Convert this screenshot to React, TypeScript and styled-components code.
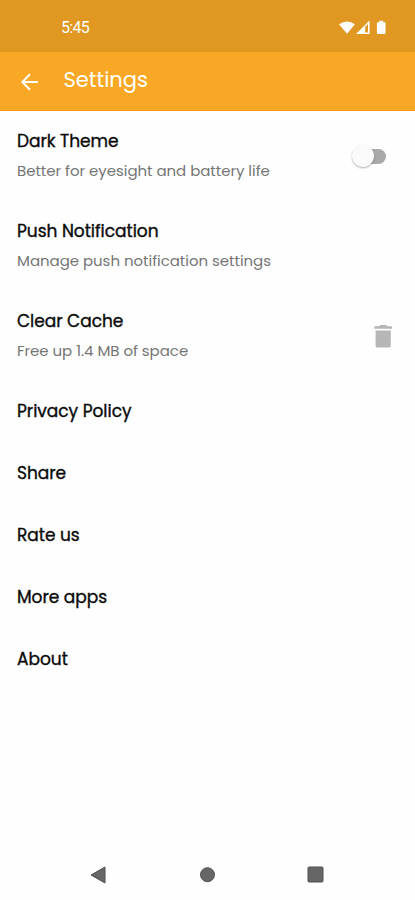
import React from 'react';
import styled, { createGlobalStyle } from 'styled-components';

const GlobalStyle = createGlobalStyle`
  *, *::before, *::after { box-sizing: border-box; }
  html, body { margin: 0; padding: 0; background: #fefefe; }
  body { font-family: Poppins, Inter, sans-serif; font-feature-settings: 'cv11' 1; }
`;

const Screen = styled.div`
  width: 100%;
  height: 900px;
  display: flex;
  flex-direction: column;
  background: #fefefe;
  overflow: hidden;
`;

const StatusBar = styled.div`
  height: 52px;
  flex: none;
  display: flex;
  align-items: center;
  justify-content: space-between;
  padding: 3px 28px 0 61px;
  background: #e09822;
  color: #fff;
`;

const Clock = styled.span`
  padding-top: 1px;
  font-family: Roboto, sans-serif;
  font-size: 16px;
  line-height: 20px;
  letter-spacing: -0.7px;
`;

const StatusIcons = styled.svg`
  display: block;
  width: 48px;
  height: 16px;
`;

const AppBar = styled.header`
  height: 59px;
  flex: none;
  display: flex;
  align-items: center;
  padding-left: 20px;
  background: #f9a825;
  border-bottom: 1px solid #f79f10;
  color: #fff;
`;

const BackButton = styled.button`
  width: 20px;
  height: 20px;
  margin: 2px 23.5px 0 0;
  padding: 0;
  border: 0;
  background: none;
  color: inherit;
  svg { display: block; }
`;

const Heading = styled.h1`
  margin: 0;
  padding-bottom: 3px;
  font-size: 21px;
  line-height: 30px;
  font-weight: 400;
`;

const List = styled.main`
  flex: 1;
`;

const Row = styled.div<{ $tall: boolean }>`
  height: ${p => (p.$tall ? 90 : 62)}px;
  padding: 15px 20px 0 17px;
  display: flex;
  justify-content: space-between;
`;

const Label = styled.div`
  font-size: 17px;
  line-height: 30px;
  font-weight: 400;
  letter-spacing: -0.02px;
  -webkit-text-stroke: 0.35px #0a0a0a;
  color: #0a0a0a;
  white-space: nowrap;
`;

const Detail = styled.div`
  font-size: 15px;
  line-height: 30px;
  font-weight: 400;
  letter-spacing: -0.04px;
  color: #757575;
  white-space: nowrap;
`;

const Switch = styled.button`
  width: 34px;
  height: 22px;
  margin: 19px 9px 0 0;
  padding: 0;
  border: 0;
  background: none;
  display: flex;
  align-items: center;
`;

const Thumb = styled.span`
  width: 22px;
  height: 22px;
  flex: none;
  border-radius: 50%;
  background: #fafafa;
  box-shadow: 0 1px 2px rgba(0, 0, 0, 0.3);
  z-index: 1;
`;

const Track = styled.span`
  width: 23px;
  height: 15px;
  flex: none;
  margin-left: -11px;
  border-radius: 0 8px 8px 0;
  background: #a9a9a9;
`;

const Trash = styled.svg`
  display: block;
  width: 18px;
  height: 23px;
  margin: 19px 3px 0 0;
  fill: #b6b6b6;
`;

const NavBar = styled.nav`
  height: 50px;
  flex: none;
  display: flex;
  justify-content: space-between;
  align-items: center;
  padding: 0 91px 1px 90px;
  svg { display: block; fill: #666; stroke: #505050; }
`;

type Item = { label: string; detail?: string; control?: 'switch' | 'trash' };

const items: Item[] = [
  { label: 'Dark Theme', detail: 'Better for eyesight and battery life', control: 'switch' },
  { label: 'Push Notification', detail: 'Manage push notification settings' },
  { label: 'Clear Cache', detail: 'Free up 1.4 MB of space', control: 'trash' },
  { label: 'Privacy Policy' },
  { label: 'Share' },
  { label: 'Rate us' },
  { label: 'More apps' },
  { label: 'About' },
];

export default function App() {
  return (
    <Screen>
      <GlobalStyle />
      <StatusBar>
        <Clock>5:45</Clock>
        <StatusIcons viewBox="0 0 48 16" fill="#fff">
          <path d="M0 4.2Q8 -1.2 16 4.2L8 13.8Z" />
          <path fillRule="evenodd" d="M30.600 .6V14H17Z M26.200 6.800V12.400H29V4Z" />
          <path d="M40.2 .8h4v1.4h1.6q.7 0 .7.7V13q0 1-1 1h-6.600q-1 0-1-1V2.900q0-.7.7-.7h1.600Z" />
        </StatusIcons>
      </StatusBar>
      <AppBar>
        <BackButton aria-label="Back">
          <svg width="20" height="20" viewBox="0 0 20 20" fill="none" stroke="#fff" strokeWidth="2">
            <path d="M18 10H3M10 2.300L2.300 10L10 17.700" />
          </svg>
        </BackButton>
        <Heading>Settings</Heading>
      </AppBar>
      <List>
        {items.map(item => (
          <Row key={item.label} $tall={!!item.detail}>
            <div>
              <Label>{item.label}</Label>
              {item.detail && <Detail>{item.detail}</Detail>}
            </div>
            {item.control === 'switch' && (
              <Switch role="switch" aria-checked={false} aria-label={item.label}>
                <Thumb />
                <Track />
              </Switch>
            )}
            {item.control === 'trash' && (
              <Trash viewBox="0 0 18 23">
                <path d="M.4 1.300H4.900L6.300 0H12.200L13.600 1.300H18V3.700H.4Z M1.600 5.500H16.800V21Q16.800 22.600 14.800 22.600H3.600Q1.600 22.600 1.600 21Z" />
              </Trash>
            )}
          </Row>
        ))}
      </List>
      <NavBar>
        <svg width="16" height="18" viewBox="0 0 16 18"><path d="M1 9L15 1V17Z" strokeLinejoin="round" /></svg>
        <svg width="16" height="16" viewBox="0 0 16 16"><circle cx="8.5" cy="7.700" r="7" /></svg>
        <svg width="17" height="17" viewBox="0 0 17 17"><rect x="1" y="1" width="15" height="15" rx="1" /></svg>
      </NavBar>
    </Screen>
  );
}
